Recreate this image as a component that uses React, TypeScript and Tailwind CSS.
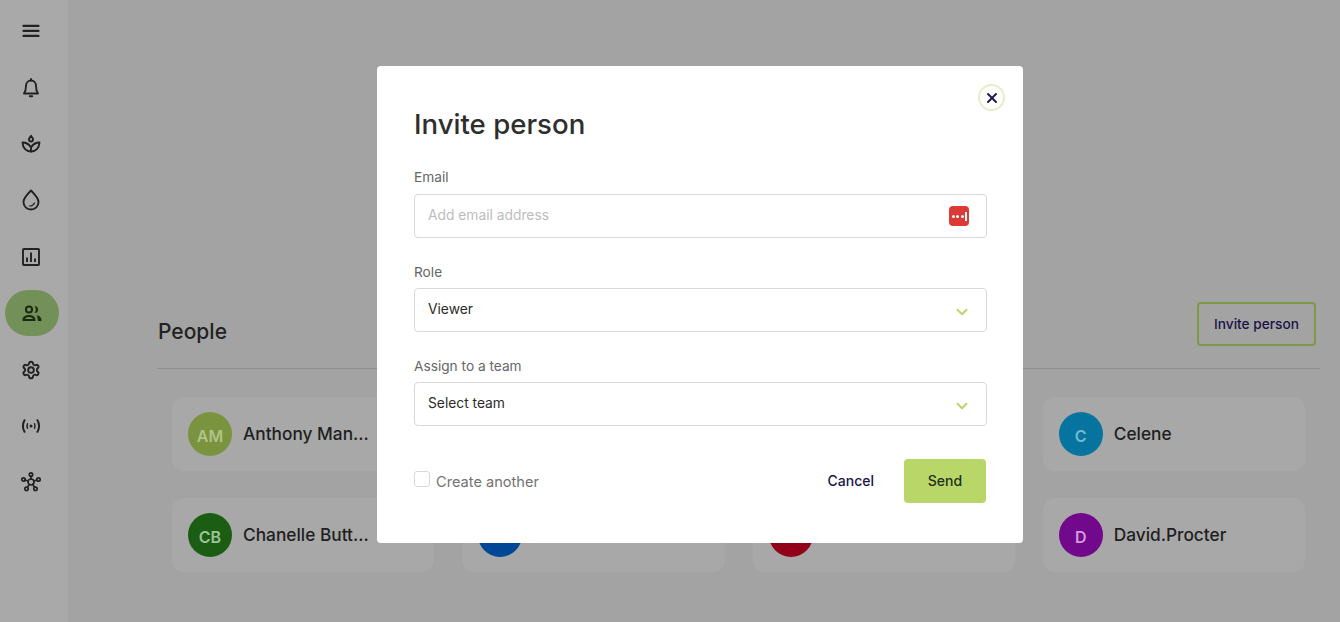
import { ChevronDown, X } from "lucide-react";

const s = { fill: "none", stroke: "currentColor", strokeWidth: 2, strokeLinecap: "round" as const, strokeLinejoin: "round" as const };

function Burger() {
  return (
    <svg width="18" height="14" viewBox="0 0 18 14" fill="currentColor">
      <rect x="0.500" y="0.800" width="17" height="2.300" rx="0.800" />
      <rect x="0.500" y="5.800" width="17" height="2.300" rx="0.800" />
      <rect x="0.500" y="10.800" width="17" height="2.300" rx="0.800" />
    </svg>
  );
}
function BellIcon() {
  return (
    <svg width="18" height="20" viewBox="0 0 18 20" {...s} strokeWidth={1.900}>
      <path d="M9 2.500c-3 0-5 2.300-5 5.300 0 4-.7 6-2 7.700h14c-1.300-1.700-2-3.700-2-7.700 0-3-2-5.300-5-5.300z" />
      <path d="M9 1v1.500M7.800 18.300h2.400" />
    </svg>
  );
}
function Lotus() {
  return (
    <svg width="20" height="20" viewBox="0 0 20 20" {...s} strokeWidth={1.900}>
      <path d="M10 1.800c1.300 1.400 2 2.500 2 3.700a2 2 0 0 1-4 0c0-1.200.7-2.300 2-3.700z" />
      <path d="M1.500 8.500c3.500 0 6.500 1.500 8.500 5 2-3.500 5-5 8.500-5-.3 5.500-3.800 9-8.500 9s-8.200-3.500-8.500-9z" />
      <path d="M10 13.500v4" />
    </svg>
  );
}
function Drop() {
  return (
    <svg width="20" height="22" viewBox="0 0 20 22" {...s} strokeWidth={1.900}>
      <path d="M10 1.500c4 4 7.500 7.500 7.500 11.500a7.500 7.500 0 0 1-15 0C2.500 9 6 5.500 10 1.500z" />
      <path d="M8.500 17c2.300.1 4-1 5-3" strokeWidth={1.200} />
    </svg>
  );
}
function Chart() {
  return (
    <svg width="18" height="18" viewBox="0 0 18 18" {...s} strokeWidth={1.900} strokeLinecap="butt" strokeLinejoin="miter">
      <rect x="1" y="1" width="16" height="16" rx="0.800" />
      <path d="M5 14V9.500M9 14V4.500M13 14v-3.500" />
    </svg>
  );
}
function People() {
  return (
    <svg width="20" height="17" viewBox="0 0 20 17" fill="currentColor" stroke="none">
      <circle cx="7" cy="4.500" r="3.100" fill="none" stroke="currentColor" strokeWidth="2" />
      <path d="M12.500 1a3.500 3.500 0 0 1 0 7c.9-1 1.300-2.200 1.300-3.500s-.4-2.500-1.300-3.500z" />
      <path d="M.5 15c0-3.200 3-5 6.500-5s6.500 1.800 6.500 5v1H.5v-1zm2.500-1h8c-.6-1.200-2.200-2-4-2s-3.400.8-4 2z" />
      <path d="M14.500 10.200c2.800.4 5 1.900 5 4.800v1h-3.600c0-2.200-.4-4.200-1.400-5.800z" />
    </svg>
  );
}
function Gear() {
  return (
    <svg width="20" height="20" viewBox="0 0 24 24" {...s} strokeWidth={2.300}>
      <path d="M9.671 4.136a2.340 2.340 0 0 1 4.659 0 2.340 2.340 0 0 0 3.319 1.915 2.340 2.340 0 0 1 2.330 4.033 2.340 2.340 0 0 0 0 3.831 2.340 2.340 0 0 1-2.330 4.033 2.340 2.340 0 0 0-3.319 1.915 2.340 2.340 0 0 1-4.659 0 2.340 2.340 0 0 0-3.320-1.915 2.340 2.340 0 0 1-2.330-4.033 2.340 2.340 0 0 0 0-3.831A2.340 2.340 0 0 1 6.350 6.051a2.340 2.340 0 0 0 3.319-1.915" />
      <circle cx="12" cy="12" r="3.400" />
    </svg>
  );
}
function Signal() {
  return (
    <svg width="20" height="14" viewBox="0 0 20 14" {...s} strokeWidth={2}>
      <path d="M3.500 1.200C1.500 4.800 1.500 9.200 3.500 12.800M16.500 1.200c2 3.600 2 8 0 11.600" />
      <path d="M6.500 4.700c-.7 1.500-.7 3.100 0 4.600M13.500 4.700c.7 1.500.7 3.100 0 4.600" strokeWidth={1.500} />
      <circle cx="10" cy="7" r="1.500" fill="currentColor" stroke="none" />
    </svg>
  );
}
function Hub() {
  return (
    <svg width="20" height="20" viewBox="0 0 20 20" {...s} strokeWidth={1.700}>
      <circle cx="10" cy="10" r="3" />
      <circle cx="10" cy="2.600" r="1.700" />
      <circle cx="2.500" cy="7.500" r="1.700" />
      <circle cx="17.500" cy="7.500" r="1.700" />
      <circle cx="5.500" cy="16.800" r="1.700" />
      <circle cx="14.500" cy="16.800" r="1.700" />
      <path d="M10 4.300v2.700M4.100 8l3 1M15.900 8l-3 1M6.500 15.400l1.700-3M13.500 15.400l-1.700-3" />
    </svg>
  );
}

function Card({ initials, name, color, text }: { initials: string; name: string; color: string; text: string }) {
  return (
    <div className="h-[74px] rounded-xl bg-[#a8a8a8] flex items-center pl-4 pr-3 gap-[11px] min-w-0">
      <div className={`w-11 h-11 shrink-0 rounded-full flex items-center justify-center pt-1 text-base font-semibold ${color} ${text}`}>{initials}</div>
      <div className="text-[17.300px] font-medium text-[#1f1f1f] whitespace-nowrap">{name}</div>
    </div>
  );
}

function Field({ label, gap, children }: { label: string; gap: string; children: React.ReactNode }) {
  return (
    <div>
      <div className={`text-[13.700px] leading-5 text-[#666666] ${gap}`}>{label}</div>
      {children}
    </div>
  );
}

function SelectBox({ value }: { value: string }) {
  return (
    <div className="h-11 rounded border border-[#d9d9d9] pl-[13px] pr-[15px] flex items-center justify-between text-[13.800px] text-[#2b2b2b]">
      <span className="pb-[2px]">{value}</span>
      <ChevronDown size={18} strokeWidth={2.600} className="text-[#b9d668] mt-[3px]" />
    </div>
  );
}

export default function App() {
  const icon = "h-[56.400px] w-full flex items-center justify-center";
  return (
    <div className="relative w-[1340px] h-[622px] overflow-hidden flex bg-[#a3a3a3] font-['Inter','Liberation_Sans',sans-serif]">
      <aside className="w-[68px] shrink-0 bg-[#a9a9a9] flex flex-col items-center text-[#222222] pt-[3px] pr-[6px]">
        <div className={icon}><Burger /></div>
        <div className={icon}><BellIcon /></div>
        <div className={icon}><Lotus /></div>
        <div className={icon}><Drop /></div>
        <div className={icon}><Chart /></div>
        <div className={icon}>
          <div className="ml-[2px] w-[54px] h-[46px] shrink-0 rounded-[23px] bg-[#729058] flex items-center justify-center text-[#1c2a14]"><People /></div>
        </div>
        <div className={icon}><Gear /></div>
        <div className={icon}><Signal /></div>
        <div className={icon}><Hub /></div>
      </aside>

      <main className="flex-1 pt-[302px] pl-[89px] pr-5">
        <div className="h-[67px] border-b border-[#8f8f8f] flex items-start justify-between">
          <h2 className="pl-px pt-px text-[21px] leading-[58px] font-medium text-[#222222]">People</h2>
          <button className="w-[119px] h-11 mr-1 rounded border-2 border-[#7e9a48] text-[13.700px] font-medium text-[#1a1446]">Invite person</button>
        </div>
        <div className="grid grid-cols-4 gap-x-[28px] gap-y-[27px] pt-[28px] pl-[15px] pr-[15px]">
          <Card initials="AM" name="Anthony Man..." color="bg-[#7a933e]" text="text-[#b0c288]" />
          <Card initials="" name="" color="bg-transparent" text="" />
          <Card initials="" name="" color="bg-transparent" text="" />
          <Card initials="C" name="Celene" color="bg-[#06749e]" text="text-[#74b8d2]" />
          <Card initials="CB" name="Chanelle Butt..." color="bg-[#1b5e13]" text="text-[#9dc296]" />
          <Card initials="" name="" color="bg-[#004896]" text="" />
          <Card initials="" name="" color="bg-[#910018]" text="" />
          <Card initials="D" name="David.Procter" color="bg-[#72098d]" text="text-[#cf9cdc]" />
        </div>
      </main>

      <div className="absolute left-[377px] top-[66px] w-[646px] h-[477px] rounded bg-white pt-[38px] pl-[37px] pr-[36px]">
        <button className="absolute right-[18px] top-[18px] w-[27px] h-[27px] rounded-full border-2 border-[#e6eec8] flex items-center justify-center text-[#1e1b4b]">
          <X size={16} strokeWidth={3} />
        </button>
        <h1 className="text-[27.600px] leading-10 font-medium text-[#2e2e2e] mb-[23px]">Invite person</h1>
        <Field label="Email" gap="mb-[7px]">
          <div className="h-11 rounded border border-[#d9d9d9] pl-[13px] pr-[17px] flex items-center justify-between text-[13.800px] text-[#bdbdbd]">
            <span className="pb-[2px]">Add email address</span>
            <div className="w-[20px] h-[20px] rounded-[4px] bg-[#dc3a36] flex items-center justify-center gap-[1.500px]">
              <span className="w-[3px] h-[3px] rounded-full bg-white" />
              <span className="w-[3px] h-[3px] rounded-full bg-white" />
              <span className="w-[3px] h-[3px] rounded-full bg-white" />
              <span className="w-[1.500px] h-[9px] bg-white" />
            </div>
          </div>
        </Field>
        <div className="h-[24px]" />
        <Field label="Role" gap="mb-[6px]"><SelectBox value="Viewer" /></Field>
        <div className="h-[24px]" />
        <Field label="Assign to a team" gap="mb-[6px]"><SelectBox value="Select team" /></Field>
        <div className="mt-[33px] flex items-center justify-between">
          <div className="flex items-center gap-[6px]">
            <span className="w-4 h-4 rounded-[3px] border border-[#d9d9d9] -mt-[3px]" />
            <span className="pt-[3px] text-[14.600px] text-[#737373]">Create another</span>
          </div>
          <div className="flex items-center gap-[30px] mr-px">
            <button className="text-sm font-medium text-[#1a1446]">Cancel</button>
            <button className="w-[82px] h-11 rounded bg-[#b9d668] text-sm font-medium text-[#20301a]">Send</button>
          </div>
        </div>
      </div>
    </div>
  );
}
